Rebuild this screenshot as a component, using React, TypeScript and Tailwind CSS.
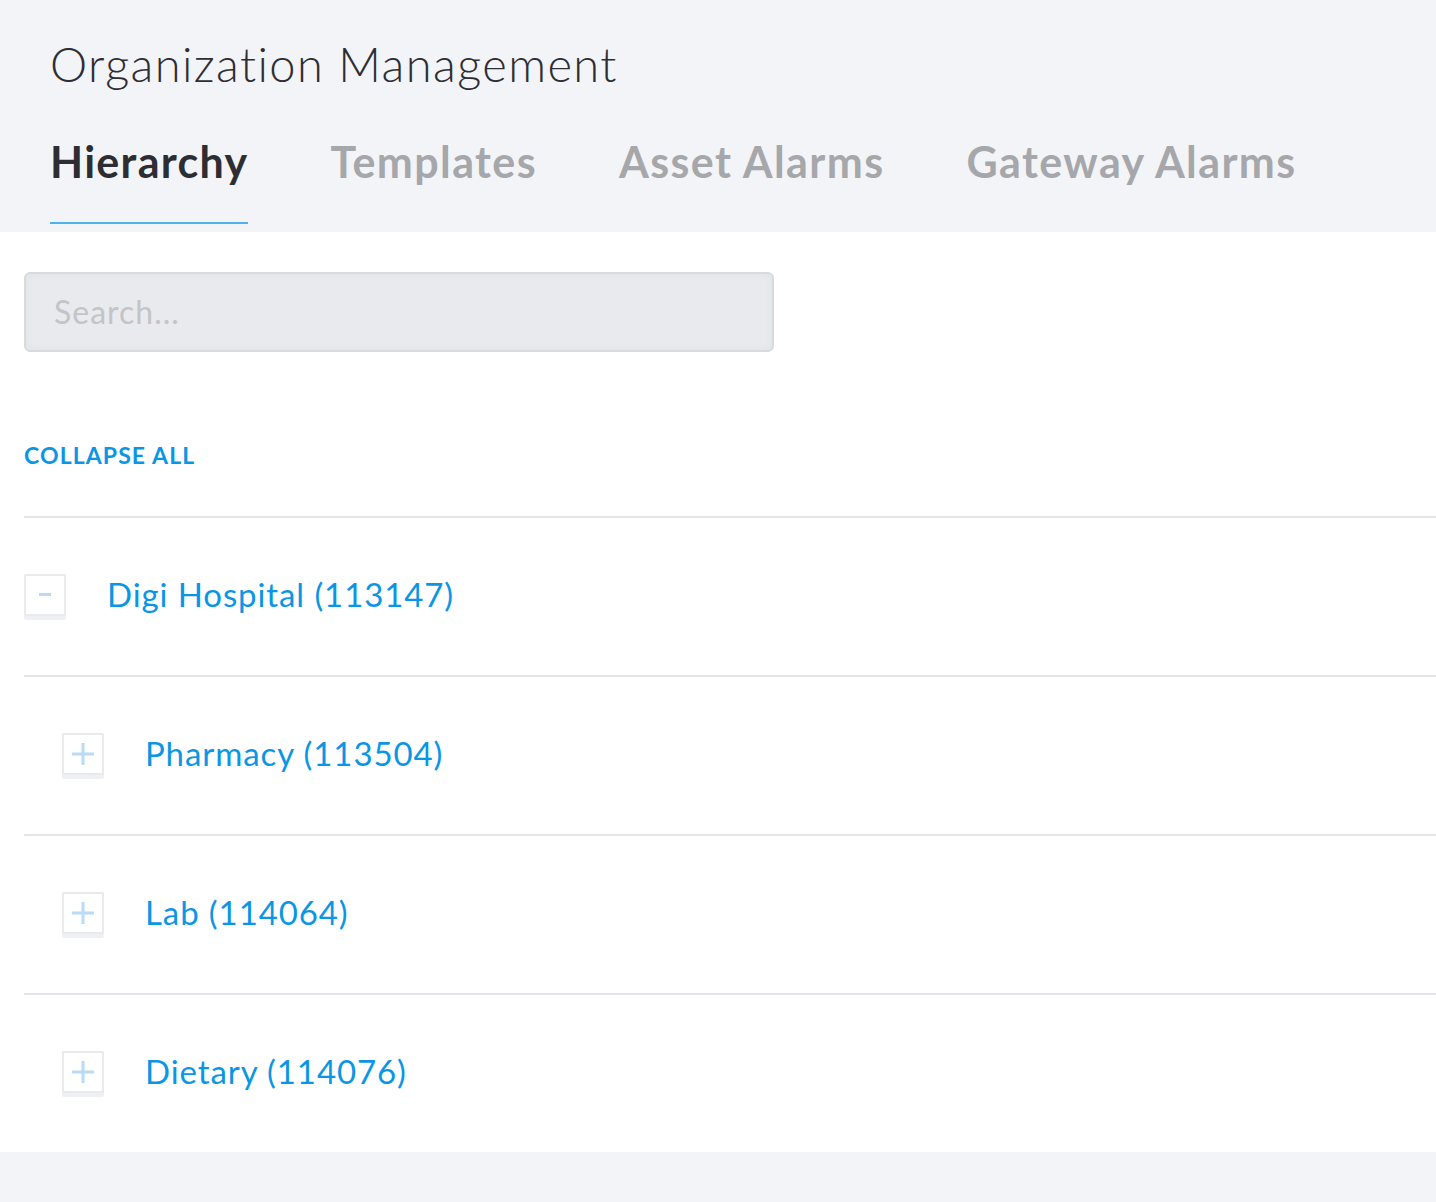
import React from 'react'

const TABS = ['Hierarchy', 'Templates', 'Asset Alarms', 'Gateway Alarms']

const NODES = [
  { name: 'Digi Hospital (113147)', depth: 0, open: true },
  { name: 'Pharmacy (113504)', depth: 1, open: false },
  { name: 'Lab (114064)', depth: 1, open: false },
  { name: 'Dietary (114076)', depth: 1, open: false },
]

function ToggleBox({ open }: { open: boolean }) {
  return (
    <div className="w-[42px] h-[46px] rounded-[2px] bg-[#eef0f3] shrink-0">
      <div className="w-[42px] h-[42px] rounded-[2px] bg-white border-2 border-[#e8eaee] flex items-center justify-center">
        {open ? (
          <div className="w-[12px] h-[3px] bg-[#b9dbf5]" />
        ) : (
          <svg width="24" height="24" viewBox="0 0 24 24">
            <path d="M12 1v22M1 12h22" stroke="#b9dbf5" strokeWidth="3" />
          </svg>
        )}
      </div>
    </div>
  )
}

export default function App() {
  return (
    <div className="min-h-[1202px] bg-[#f3f4f8] font-['Lato',sans-serif]">
      <div className="px-[50px] pt-[36px]">
        <h1 className="text-[47px] leading-[56px] font-light text-[#2d2e33] tracking-[1.4px]">Organization Management</h1>
        <div className="flex gap-[82px] mt-[20px]">
          {TABS.map((tab, i) => (
            <div
              key={tab}
              className={
                i === 0
                  ? 'h-[112px] pt-[24px] border-b-2 border-[#4fb2ef] text-[43px] leading-[52px] font-bold text-[#2d2e33] tracking-[1.3px]'
                  : 'h-[112px] pt-[24px] text-[43px] leading-[52px] font-bold text-[#a6a7ab] tracking-[1.4px]'
              }
            >
              {tab}
            </div>
          ))}
        </div>
      </div>

      <div className="bg-white mt-[8px] pl-[24px] pt-[40px]">
        <div className="w-[750px] h-[80px] rounded-[6px] border-2 border-[#d9dadd] bg-[#e9eaee] shadow-[inset_0_0_8px_rgba(0,0,0,0.04)] flex items-center px-[28px]">
          <span className="text-[32px] text-[#c3c4c6] tracking-[1px]">Search...</span>
        </div>

        <div className="mt-[89px] text-[23px] leading-[28px] font-bold text-[#0b96e5] tracking-[1.1px]">COLLAPSE ALL</div>

        <div className="mt-[47px]">
          {NODES.map((node) => (
            <div
              key={node.name}
              className="h-[159px] border-t-2 border-[#e3e5ea] flex items-center"
            >
              <div className={node.depth === 0 ? 'flex items-center gap-[41px]' : 'flex items-center gap-[41px] pl-[38px]'}>
                <ToggleBox open={node.open} />
                <span className="text-[33px] text-[#0b96e5] -mt-[4px] tracking-[0.9px]">{node.name}</span>
              </div>
            </div>
          ))}
        </div>
      </div>
    </div>
  )
}
